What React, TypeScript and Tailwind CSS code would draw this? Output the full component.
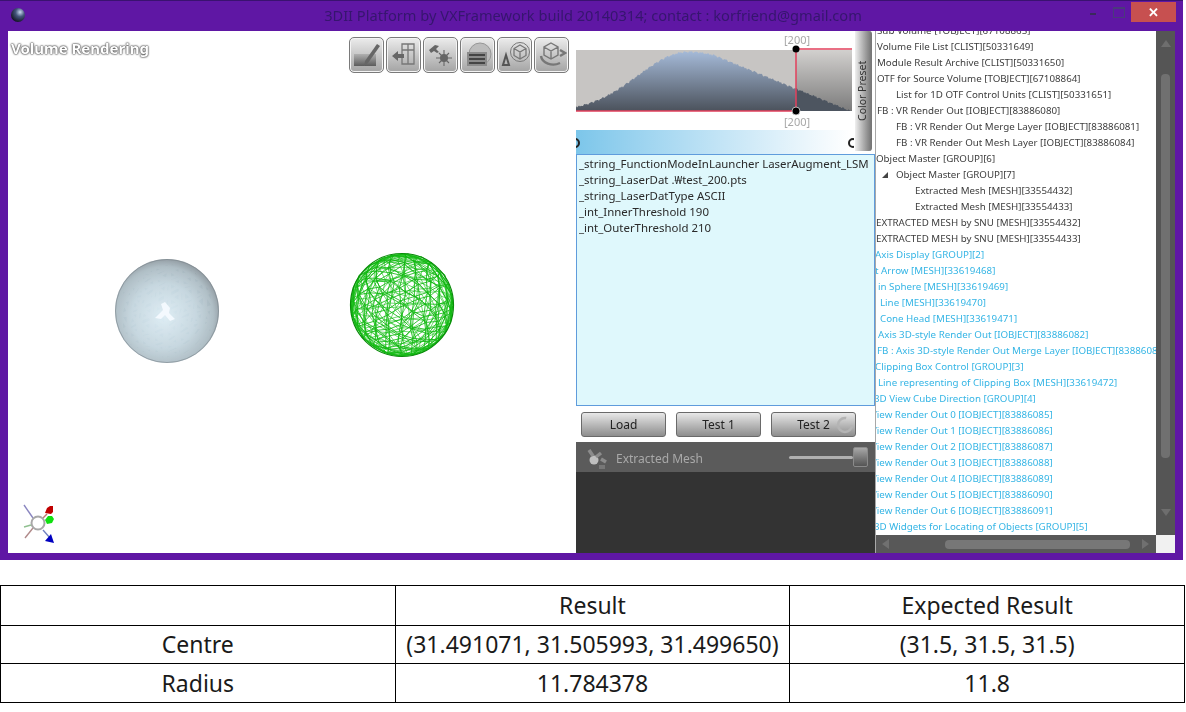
import { useMemo } from 'react';

const FONT = "font-['Noto_Sans',sans-serif]";

type Row = { text: string; cls: string };

const DARK = 'text-[#3d3d3d]';
const BLUE = 'text-[#35b5e5]';

const treeRows: Row[] = [
  { text: 'Sub Volume [TOBJECT][67108865]', cls: 'ml-[1px] ' + DARK },
  { text: 'Volume File List [CLIST][50331649]', cls: 'ml-[1px] ' + DARK },
  { text: 'Module Result Archive [CLIST][50331650]', cls: 'ml-[1px] ' + DARK },
  { text: 'OTF for Source Volume [TOBJECT][67108864]', cls: 'ml-[1px] ' + DARK },
  { text: 'List for 1D OTF Control Units [CLIST][50331651]', cls: 'ml-[20px] ' + DARK },
  { text: 'FB : VR Render Out [IOBJECT][83886080]', cls: 'ml-[1px] ' + DARK },
  { text: 'FB : VR Render Out Merge Layer [IOBJECT][83886081]', cls: 'ml-[20px] ' + DARK },
  { text: 'FB : VR Render Out Mesh Layer [IOBJECT][83886084]', cls: 'ml-[20px] ' + DARK },
  { text: 'Object Master [GROUP][6]', cls: 'ml-[0px] ' + DARK },
  { text: 'Object Master [GROUP][7]', cls: 'ml-[20px] ' + DARK },
  { text: 'Extracted Mesh [MESH][33554432]', cls: 'ml-[39px] ' + DARK },
  { text: 'Extracted Mesh [MESH][33554433]', cls: 'ml-[39px] ' + DARK },
  { text: 'EXTRACTED MESH by SNU [MESH][33554432]', cls: 'ml-[0px] ' + DARK },
  { text: 'EXTRACTED MESH by SNU [MESH][33554433]', cls: 'ml-[0px] ' + DARK },
  { text: 'Axis Display [GROUP][2]', cls: 'ml-[-1px] ' + BLUE },
  { text: 't Arrow [MESH][33619468]', cls: 'ml-[-1px] ' + BLUE },
  { text: 'in Sphere [MESH][33619469]', cls: 'ml-[2px] ' + BLUE },
  { text: 'Line [MESH][33619470]', cls: 'ml-[4px] ' + BLUE },
  { text: 'Cone Head [MESH][33619471]', cls: 'ml-[4px] ' + BLUE },
  { text: 'Axis 3D-style Render Out [IOBJECT][83886082]', cls: 'ml-[2px] ' + BLUE },
  { text: 'FB : Axis 3D-style Render Out Merge Layer [IOBJECT][83886083]', cls: 'ml-[1px] ' + BLUE },
  { text: 'Clipping Box Control [GROUP][3]', cls: 'ml-[-1px] ' + BLUE },
  { text: 'Line representing of Clipping Box [MESH][33619472]', cls: 'ml-[2px] ' + BLUE },
  { text: '3D View Cube Direction [GROUP][4]', cls: 'ml-[-2px] ' + BLUE },
  { text: 'View Render Out 0 [IOBJECT][83886085]', cls: 'ml-[-5px] ' + BLUE },
  { text: 'View Render Out 1 [IOBJECT][83886086]', cls: 'ml-[-5px] ' + BLUE },
  { text: 'View Render Out 2 [IOBJECT][83886087]', cls: 'ml-[-5px] ' + BLUE },
  { text: 'View Render Out 3 [IOBJECT][83886088]', cls: 'ml-[-5px] ' + BLUE },
  { text: 'View Render Out 4 [IOBJECT][83886089]', cls: 'ml-[-5px] ' + BLUE },
  { text: 'View Render Out 5 [IOBJECT][83886090]', cls: 'ml-[-5px] ' + BLUE },
  { text: 'View Render Out 6 [IOBJECT][83886091]', cls: 'ml-[-5px] ' + BLUE },
  { text: '3D Widgets for Locating of Objects [GROUP][5]', cls: 'ml-[-2px] ' + BLUE },
];

const paramLines = [
  '_string_FunctionModeInLauncher LaserAugment_LSM',
  '_string_LaserDat .₩test_200.pts',
  '_string_LaserDatType ASCII',
  '_int_InnerThreshold 190',
  '_int_OuterThreshold 210',
];

// icosphere edges projected to 2d, both faces visible like a wireframe render
function wireEdges(cx: number, cy: number, r: number, depth: number, jitter: number, rotA = 0.5, rotB = 0.9) {
  const t = (1 + Math.sqrt(5)) / 2;
  let verts: number[][] = [
    [-1, t, 0], [1, t, 0], [-1, -t, 0], [1, -t, 0],
    [0, -1, t], [0, 1, t], [0, -1, -t], [0, 1, -t],
    [t, 0, -1], [t, 0, 1], [-t, 0, -1], [-t, 0, 1],
  ];
  const norm = (v: number[]) => {
    const l = Math.hypot(v[0], v[1], v[2]);
    return [v[0] / l, v[1] / l, v[2] / l];
  };
  verts = verts.map(norm);
  let faces = [
    [0, 11, 5], [0, 5, 1], [0, 1, 7], [0, 7, 10], [0, 10, 11],
    [1, 5, 9], [5, 11, 4], [11, 10, 2], [10, 7, 6], [7, 1, 8],
    [3, 9, 4], [3, 4, 2], [3, 2, 6], [3, 6, 8], [3, 8, 9],
    [4, 9, 5], [2, 4, 11], [6, 2, 10], [8, 6, 7], [9, 8, 1],
  ];
  for (let d = 0; d < depth; d++) {
    const cache = new Map<string, number>();
    const mid = (a: number, b: number) => {
      const k = a < b ? a + '_' + b : b + '_' + a;
      const hit = cache.get(k);
      if (hit !== undefined) return hit;
      const m = norm([0, 1, 2].map((i) => (verts[a][i] + verts[b][i]) / 2));
      verts.push(m);
      cache.set(k, verts.length - 1);
      return verts.length - 1;
    };
    const next: number[][] = [];
    for (const [a, b, c] of faces) {
      const ab = mid(a, b);
      const bc = mid(b, c);
      const ca = mid(c, a);
      next.push([a, ab, ca], [b, bc, ab], [c, ca, bc], [ab, bc, ca]);
    }
    faces = next;
  }
  const ca = Math.cos(rotA), sa = Math.sin(rotA), cb = Math.cos(rotB), sb = Math.sin(rotB);
  const pts = verts.map(([x, y, z], i) => {
    const jx = jitter * Math.sin(i * 12.9898);
    const jy = jitter * Math.sin(i * 78.233);
    const x1 = x * ca - z * sa;
    const z1 = x * sa + z * ca;
    const y1 = y * cb - z1 * sb;
    return [cx + (x1 + jx * (1 - x1 * x1)) * r, cy + (y1 + jy * (1 - y1 * y1)) * r];
  });
  const seen = new Set<string>();
  let d = '';
  for (const f of faces) {
    for (let i = 0; i < 3; i++) {
      const a = f[i], b = f[(i + 1) % 3];
      const k = a < b ? a + '_' + b : b + '_' + a;
      if (seen.has(k)) continue;
      seen.add(k);
      d += `M${pts[a][0].toFixed(1)} ${pts[a][1].toFixed(1)}L${pts[b][0].toFixed(1)} ${pts[b][1].toFixed(1)}`;
    }
  }
  return d;
}

function histogramPath() {
  let d = 'M0 61';
  for (let x = 0; x <= 276; x += 1) {
    const dx = x - 112;
    const s = dx < 0 ? 50 : 78;
    const h = Math.min(60 * Math.exp(-(dx * dx) / (2 * s * s)), (23 * (276 - x)) / 56);
    const noise = 1.1 * Math.abs(Math.sin(x * 1.7) + Math.sin(x * 0.63));
    d += `L${x} ${Math.min(61, 61 - h + noise).toFixed(1)}`;
  }
  return d + 'L276 61Z';
}

function Scene() {
  const wire = useMemo(() => wireEdges(394, 274, 51, 2, 0.04), []);
  const wireBack = useMemo(() => wireEdges(394, 274, 51, 2, 0.05, 1.7, 2.3), []);
  const facets = useMemo(() => wireEdges(159, 280, 52, 2, 0.02), []);
  return (
    <svg width="567" height="522" viewBox="0 0 567 522" className="block">
      <defs>
        <radialGradient id="ball" cx="0.47" cy="0.55" r="0.56">
          <stop offset="0" stopColor="#dcecf4" />
          <stop offset="0.55" stopColor="#c2d4dd" />
          <stop offset="0.85" stopColor="#a8b8c0" />
          <stop offset="1" stopColor="#869198" />
        </radialGradient>
        <clipPath id="ballClip">
          <circle cx="159" cy="280" r="52" />
        </clipPath>
      </defs>
      <circle cx="159" cy="280" r="52" fill="url(#ball)" />
      <path d={facets} clipPath="url(#ballClip)" fill="none" stroke="#ffffff" strokeOpacity="0.09" strokeWidth="3" />
      <circle cx="159" cy="280" r="51.5" fill="none" stroke="#7d878d" strokeOpacity="0.6" strokeWidth="1" />
      <path d="M151 283l-4 4 6 1 4-4 5 6 5-2-6-6 1-5-5-6-4 2 2 6z" fill="#f6fbff" opacity="0.9" />
      <path d={wireBack} fill="none" stroke="#30c830" strokeWidth="0.7" />
      <path d={wire} fill="none" stroke="#10b810" strokeWidth="0.85" />
      <circle cx="394" cy="274" r="51.5" fill="none" stroke="#0a8c0a" strokeWidth="1.200" />
      {/* axis widget */}
      <g fill="none" strokeWidth="1.4">
        <path d="M16 474l9 13" stroke="#8a86c0" />
        <path d="M17 507l8-10" stroke="#b08a8a" />
        <path d="M16 496l7-2" stroke="#90c090" />
        <path d="M35 487l4-4" stroke="#b87a70" />
        <path d="M35 499l7 8" stroke="#7080c0" />
      </g>
      <circle cx="30" cy="492" r="6.500" fill="#fff" stroke="#a8a8a8" strokeWidth="2" />
      <path d="M37 482l2-5 3-2 3 0 0 6-2 2z" fill="#c00000" />
      <path d="M37 489l3-4 4 0 2 3-2 4-5 1z" fill="#10e010" />
      <path d="M37 510l6-7 3 9z" fill="#0000c0" />
    </svg>
  );
}

const toolIcons = [
  <g key="a">
    <defs>
      <linearGradient id="tool1" x1="0" y1="0" x2="0" y2="1">
        <stop offset="0" stopColor="#b0b0b0" />
        <stop offset="1" stopColor="#5c5c5c" />
      </linearGradient>
    </defs>
    <path d="M2 13h22v12H2z" fill="url(#tool1)" />
    <path d="M28 5L16 22l-4 3 1-5L25 3z" fill="#666" />
  </g>,
  <g key="b" fill="none" stroke="#777" strokeWidth="1.300">
    <path d="M13 3h12v20H13zM19 3v20M13 9h12" />
    <path d="M3 15l6-5v3h6v4H9v3z" fill="#666" stroke="none" />
  </g>,
  <g key="c" fill="#666" stroke="#666">
    <path d="M3 9l6-5 4 1-3 3 3 3-2 1-3-2-3 2z" stroke="none" />
    <circle cx="18" cy="17" r="4" stroke="none" />
    <path d="M18 9v16M10 17h16M13 12l10 10M23 12L13 22" strokeWidth="1.100" />
  </g>,
  <g key="d">
    <circle cx="17" cy="13" r="11" fill="#bcbcbc" stroke="#969696" />
    <path d="M4 11h20v14H4z" fill="#8a8a8a" />
    <path d="M6 13h16v2H6zM6 17h16v2H6zM6 21h16v2H6z" fill="#444" />
  </g>,
  <g key="e" fill="none" stroke="#777" strokeWidth="1.300">
    <circle cx="20" cy="11" r="9.500" strokeWidth="1" />
    <path d="M20 4l6 3.500v7l-6 3.500-6-3.500v-7zM14 7.500l6 3.500 6-3.500M20 11v7" />
    <path d="M6 14l3 10H3z" stroke="#555" strokeWidth="2" />
  </g>,
  <g key="f" fill="none" stroke="#777" strokeWidth="1.400">
    <path d="M14 2l7 4v8l-7 4-7-4V6zM7 6l7 4 7-4M14 10v8" />
    <path d="M4 15c1 7 11 11 19 7M23 9l5 3-5 3" strokeWidth="2.400" />
  </g>,
];

function Toolbar() {
  return (
    <div className="absolute left-[341px] top-[6px] flex gap-[2px]">
      {toolIcons.map((icon, i) => (
        <div
          key={i}
          className="flex h-[36px] w-[35px] items-center justify-center rounded-[5px] border-[1.5px] border-[#7a7a7a] bg-gradient-to-b from-[#ececec] to-[#a4a4a4] shadow-[inset_0_0_0_1px_#f4f4f4]"
        >
          <svg width="30" height="28" viewBox="0 0 30 28" className="blur-[0.4px]">
            {icon}
          </svg>
        </div>
      ))}
    </div>
  );
}

function Histogram() {
  const path = useMemo(() => histogramPath(), []);
  return (
    <div className="relative h-[99px]">
      <svg width="300" height="99" viewBox="0 0 300 99" className="block">
        <defs>
          <linearGradient id="hist" x1="0" y1="0" x2="0" y2="1">
            <stop offset="0" stopColor="#a5bad8" />
            <stop offset="1" stopColor="#4b525c" />
          </linearGradient>
          <linearGradient id="shade" x1="0" y1="0" x2="0" y2="1">
            <stop offset="0" stopColor="#d2d0ce" />
            <stop offset="1" stopColor="#7c7c7c" />
          </linearGradient>
          <clipPath id="rightSide">
            <rect x="220" y="0" width="60" height="61" />
          </clipPath>
        </defs>
        <g transform="translate(0 19)">
          <rect width="276" height="61" fill="#c7c5c3" />
          <rect x="220" width="56" height="61" fill="url(#shade)" />
          <path d={path} fill="url(#hist)" />
          <path d={path} fill="#4d5560" clipPath="url(#rightSide)" />
          <path d="M0 61H220V-1H276" fill="none" stroke="#e2405c" strokeWidth="1.500" />
          <circle cx="220" cy="-1" r="3.500" fill="#000" />
          <circle cx="220" cy="61" r="4" fill="#000" stroke="#ddd" strokeWidth="0.8" />
        </g>
      </svg>
      <span className="absolute left-[208px] top-[2px] text-[11px] leading-[14px] text-[#a8a8a8]">[200]</span>
      <span className="absolute left-[208px] top-[84px] text-[11px] leading-[14px] text-[#a8a8a8]">[200]</span>
    </div>
  );
}

function GradientBar() {
  return (
    <div className="relative h-[24px] overflow-hidden bg-gradient-to-r from-[#7cc6ea] to-[#ffffff] to-[92%]">
      <div className="absolute left-[-6px] top-[8px] h-[10px] w-[10px] rounded-full border-2 border-[#222]" />
      <div className="absolute left-[272px] top-[8px] h-[10px] w-[10px] rounded-full border-2 border-[#222] bg-white" />
      <div className="absolute left-[278px] top-0 h-full w-[8px] bg-white" />
    </div>
  );
}

function TestButton({ label, spinner }: { label: string; spinner?: boolean }) {
  return (
    <button className="relative h-[25px] w-[85px] rounded-[3px] border border-[#6a6a6a] bg-gradient-to-b from-[#e8e8e8] to-[#8e8e8e] pt-[1px] text-[12px] leading-[22px] text-[#222]">
      {label}
      {spinner && (
        <svg width="20" height="20" viewBox="0 0 20 20" className="absolute right-[0px] top-[2px]">
          <circle cx="10" cy="10" r="7" fill="none" stroke="#b4b4b4" strokeWidth="2.500" strokeDasharray="34 10" />
        </svg>
      )}
    </button>
  );
}

function MeshPanel() {
  return (
    <div className="flex-1 bg-[#333333]">
      <div className="flex h-[30px] items-center bg-[#5b5b5b]">
        <svg width="26" height="24" viewBox="0 0 26 24" className="ml-[6px] mt-[4px] blur-[0.4px]">
          <circle cx="12" cy="13" r="4.500" fill="#c0c0c0" />
          <path d="M7 3l4 6M19 6l-5 4M19 12l5 3" stroke="#8c8c8c" strokeWidth="3.500" />
          <path d="M17 18h6v4h-6z" fill="#777" />
        </svg>
        <span className="ml-[8px] mt-[4px] text-[12px] text-[#a9a9a9]">Extracted Mesh</span>
        <div className="ml-[86px] flex items-center">
          <div className="h-[3px] w-[64px] rounded-sm bg-[#b0b0b0]" />
          <div className="h-[20px] w-[15px] rounded-[2px] border border-[#8a8a8a] bg-gradient-to-b from-[#a8a8a8] to-[#555]" />
        </div>
      </div>
    </div>
  );
}

function MiddleColumn() {
  return (
    <div className="relative ml-px flex w-[299px] flex-col">
      <Histogram />
      <GradientBar />
      <div className="h-[252px] border border-[#5f9cdc] bg-[#dff8fc] pl-[2px] pt-[1px]">
        {paramLines.map((line) => (
          <div key={line} className="whitespace-nowrap text-[11.450px] leading-[16px] text-[#2a2a2a]">
            {line}
          </div>
        ))}
      </div>
      <div className="flex h-[36px] items-center gap-[10px] pl-[5px]">
        <TestButton label="Load" />
        <TestButton label="Test 1" />
        <TestButton label="Test 2" spinner />
      </div>
      <MeshPanel />
      {/* tab hanging over the column */}
      <div className="absolute left-[279px] top-0 flex h-[120px] w-[17px] items-center justify-center rounded-r-[3px] border-r border-[#777] bg-gradient-to-r from-[#f0f0f0] to-[#777777]">
        <span className="-rotate-90 whitespace-nowrap text-[10.500px] text-[#333]">Color Preset</span>
      </div>
    </div>
  );
}

function TreePanel() {
  return (
    <div className="flex w-[300px] flex-col border-l border-[#a8a8a8]">
      <div className="flex h-[504px]">
        <div className="w-[280px] overflow-hidden">
          <div className="mt-[-8px]">
            {treeRows.map((row) => (
              <div key={row.text} className={'relative h-[16px] whitespace-nowrap text-[9.750px] leading-[16px] ' + row.cls}>
                {row.text === 'Object Master [GROUP][7]' && (
                  <span className="absolute left-[-14px] top-[5px] h-0 w-0 border-b-[6px] border-l-[6px] border-b-[#444] border-l-transparent" />
                )}
                {row.text}
              </div>
            ))}
          </div>
        </div>
        <div className="flex w-[19px] flex-col items-center bg-[#555555]">
          <div className="mt-[9px] h-0 w-0 border-x-[5px] border-b-[7px] border-x-transparent border-b-[#6e6e6e]" />
          <div className="mt-[27px] h-[384px] w-[9px] rounded-[4px] bg-[#707070]" />
          <div className="mt-[51px] h-0 w-0 border-x-[5px] border-t-[7px] border-x-transparent border-t-[#6e6e6e]" />
        </div>
      </div>
      <div className="flex h-[18px]">
        <div className="relative flex w-[280px] items-center bg-[#585858]">
          <div className="ml-[6px] h-0 w-0 border-y-[5px] border-r-[7px] border-y-transparent border-r-[#707070]" />
          <div className="ml-[56px] h-[9px] w-[185px] rounded-[4px] bg-[#777777]" />
          <div className="ml-[12px] h-0 w-0 border-y-[5px] border-l-[7px] border-y-transparent border-l-[#707070]" />
        </div>
        <div className="w-[19px] bg-[#f1f1f1]" />
      </div>
    </div>
  );
}

function AppWindow() {
  return (
    <div className="flex h-[560px] w-[1183px] flex-col border-t border-[#3a1270] bg-[#5f17a4] blur-[0.35px]">
      <div className="relative flex h-[30px] items-center justify-center">
        <svg width="16" height="16" viewBox="0 0 16 16" className="absolute left-[10px] top-[6px]">
          <defs>
            <radialGradient id="orb" cx="0.65" cy="0.3" r="0.8">
              <stop offset="0" stopColor="#c8d8f0" />
              <stop offset="0.4" stopColor="#44557c" />
              <stop offset="1" stopColor="#0a0a14" />
            </radialGradient>
          </defs>
          <circle cx="8" cy="8" r="7" fill="url(#orb)" />
        </svg>
        <span className="ml-[3px] text-[14.600px] text-[#36166e] blur-[0.5px]">
          3DII Platform by VXFramework build 20140314; contact : korfriend@gmail.com
        </span>
        <div className="absolute right-[7px] top-[1px] flex items-start">
          <div className="mr-[17px] mt-[11px] h-[2px] w-[6px] bg-[#3a2a5c]" />
          <div className="mr-[6px] mt-[5px] h-[11px] w-[12px] border border-t-2 border-[#4a3a7c]" />
          <div className="flex h-[20px] w-[45px] items-center justify-center bg-[#c75050] text-[13px] font-bold leading-none text-white">
            ✕
          </div>
        </div>
      </div>
      <div className="mx-[8px] flex h-[522px] bg-white">
        <div className="relative w-[567px]">
          <Scene />
          <span className="absolute left-[3px] top-[8px] text-[15px] font-bold leading-[19px] text-white [text-shadow:0_0_1px_#444,0_0_2px_#555,0_0_2px_#555]">
            Volume Rendering
          </span>
          <Toolbar />
        </div>
        <MiddleColumn />
        <TreePanel />
      </div>
    </div>
  );
}

function ResultTable() {
  return (
    <table className="mt-[25px] w-[1185px] table-fixed border-collapse text-center text-[23px] text-[#1a1a1a]">
      <tbody>
        <tr className="h-[40px]">
          <td className="border border-black"></td>
          <td className="border border-black">Result</td>
          <td className="border border-black">Expected Result</td>
        </tr>
        <tr className="h-[38px]">
          <td className="border border-black">Centre</td>
          <td className="border border-black">(31.491071, 31.505993, 31.499650)</td>
          <td className="border border-black">(31.5, 31.5, 31.5)</td>
        </tr>
        <tr className="h-[39px]">
          <td className="border border-black">Radius</td>
          <td className="border border-black">11.784378</td>
          <td className="border border-black">11.8</td>
        </tr>
      </tbody>
    </table>
  );
}

export default function App() {
  return (
    <div className={'h-[712px] w-[1186px] overflow-hidden bg-white ' + FONT}>
      <AppWindow />
      <ResultTable />
    </div>
  );
}
